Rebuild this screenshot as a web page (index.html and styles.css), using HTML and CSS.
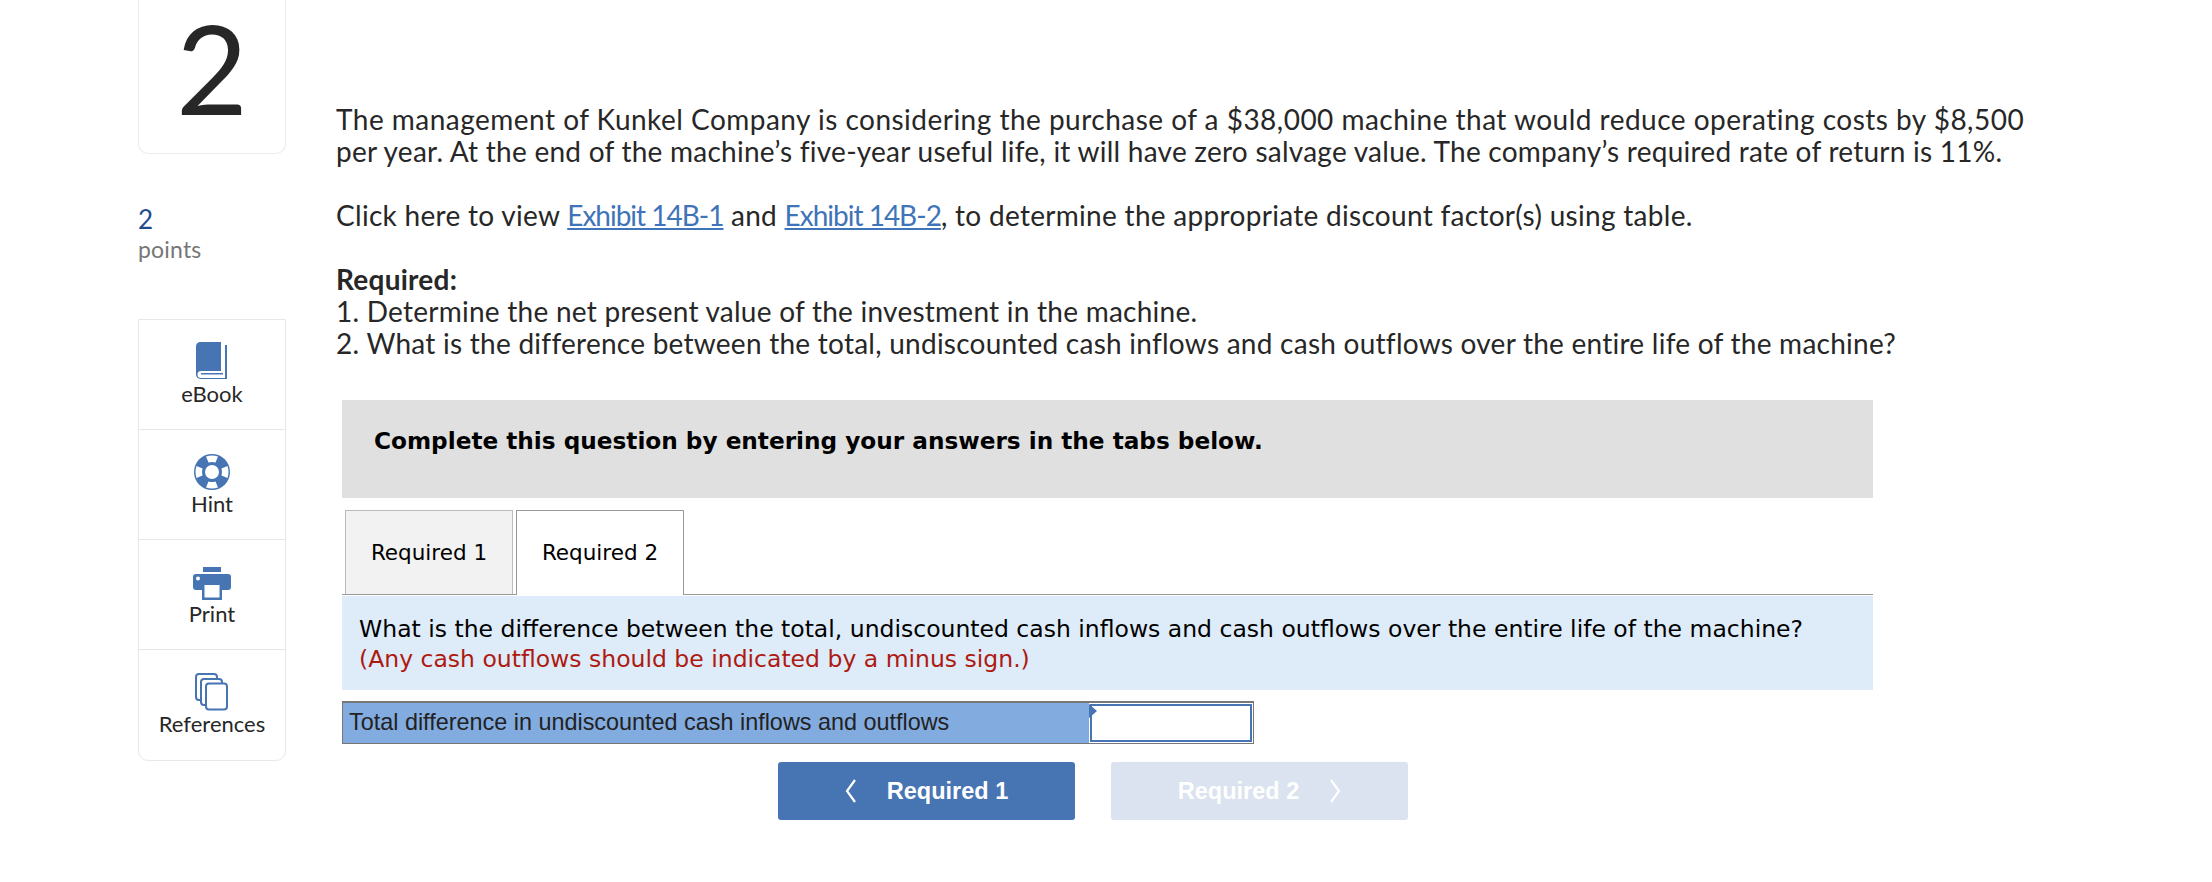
FILE: index.html
```html
<!DOCTYPE html>
<html lang="en">
<head>
    <meta charset="UTF-8">
    <title>Question 2</title>
    <link rel="stylesheet" href="styles.css">
</head>
<body>
<div class="page">
    <div class="side">
        <div class="number-card">2</div>
        <div class="points">
            <div class="points-value">2</div>
            <div class="points-label">points</div>
        </div>
        <div class="tools">
            <div class="tool">
                <svg width="36" height="40" viewBox="0 0 36 40">
                    <path fill="#4775b3" d="M6 1H27V30H7a3.500 3.500 0 0 0 0 7H31V4H33V38H7C3 38 2 35 2 33V5C2 3 4 1 6 1Z"/>
                    <path fill="#4775b3" d="M7 32H29V33.500H7Z"/>
                </svg>
                <span>eBook</span>
            </div>
            <div class="tool">
                <svg width="38" height="40" viewBox="0 -2 38 40">
                    <circle cx="19" cy="19" r="18" fill="#4775b3"/>
                    <circle cx="19" cy="19" r="7" fill="#fff"/>
                    <path fill="#fff" d="M13 3.500Q19 1.500 25 3.500L22.500 9.500Q19 8.500 15.500 9.500ZM13 34.500Q19 36.500 25 34.500L22.500 28.500Q19 29.500 15.500 28.500ZM3.500 13Q1.500 19 3.500 25L9.500 22.500Q8.500 19 9.500 15.500ZM34.500 13Q36.500 19 34.500 25L28.500 22.500Q29.500 19 28.500 15.500Z"/>
                </svg>
                <span>Hint</span>
            </div>
            <div class="tool">
                <svg width="38" height="40" viewBox="0 -6 38 40">
                    <path fill="#4775b3" d="M10 0H28V5H10ZM3 7H35a3 3 0 0 1 3 3V20a3 3 0 0 1-3 3H29V33H9V23H3a3 3 0 0 1-3-3V10a3 3 0 0 1 3-3Z"/>
                    <circle cx="5" cy="11.500" r="2" fill="#fff"/>
                    <rect x="11.500" y="18" width="15" height="12.500" fill="#fff"/>
                </svg>
                <span>Print</span>
            </div>
            <div class="tool">
                <svg width="34" height="40" viewBox="0 -2 34 40">
                    <rect x="1" y="1" width="21" height="26" rx="3" fill="#fff" stroke="#4775b3" stroke-width="2"/>
                    <rect x="6" y="6" width="21" height="26" rx="3" fill="#fff" stroke="#4775b3" stroke-width="2"/>
                    <rect x="11" y="10.500" width="21" height="26" rx="3" fill="#fff" stroke="#4775b3" stroke-width="2"/>
                </svg>
                <span>References</span>
            </div>
        </div>
    </div>

    <div class="question">
        <p><span class="wide">The management of Kunkel Company is considering the purchase of a $38,000 machine that would reduce operating costs by $8,500</span><br>per year. At the end of the machine’s five-year useful life, it will have zero salvage value. The company’s required rate of return is 11%.</p>
        <p class="tight">Click here to view <a href="#">Exhibit 14B-1</a> and <a href="#">Exhibit 14B-2</a>, to determine the appropriate discount factor(s) using table.</p>
        <p><strong>Required:</strong><br>1. Determine the net present value of the investment in the machine.<br>2. What is the difference between the total, undiscounted cash inflows and cash outflows over the entire life of the machine?</p>

        <div class="worksheet">
            <div class="banner">Complete this question by entering your answers in the tabs below.</div>
            <div class="tabs">
                <div class="tab">Required 1</div>
                <div class="tab active">Required 2</div>
            </div>
            <div class="prompt">
                What is the difference between the total, undiscounted cash inflows and cash outflows over the entire life of the machine?<br>
                <span class="prompt-note">(Any cash outflows should be indicated by a minus sign.)</span>
            </div>
            <div class="answer-row">
                <div class="answer-label">Total difference in undiscounted cash inflows and outflows</div>
                <div class="answer-cell"><div class="answer-input"></div><span class="answer-flag"></span></div>
            </div>
            <div class="nav">
                <button class="nav-btn" type="button">
                    <svg width="12" height="24" viewBox="0 0 12 24"><path d="M10 1L2 12L10 23" fill="none" stroke="#fff" stroke-width="2.200"/></svg>
                    Required 1
                </button>
                <button class="nav-btn disabled" type="button">
                    Required 2
                    <svg width="12" height="24" viewBox="0 0 12 24"><path d="M2 1L10 12L2 23" fill="none" stroke="#fff" stroke-width="2.200"/></svg>
                </button>
            </div>
        </div>
    </div>
</div>
</body>
</html>
```

FILE: styles.css
```css
html, body {
    margin: 0;
    padding: 0;
    background-color: #fff;
}
body {
    font-family: Lato, "Open Sans", sans-serif;
    color: #272727;
}
.page {
    display: flex;
    width: 2212px;
    height: 882px;
    overflow: hidden;
}
.side {
    width: 148px;
    margin-left: 138px;
}
.number-card {
    height: 154px;
    box-sizing: border-box;
    border: 1px solid #ebebeb;
    border-top: none;
    border-radius: 0 0 10px 10px;
    font-size: 124px;
    line-height: 134px;
    text-align: center;
}
.points {
    margin-top: 49px;
}
.points-value {
    font-size: 26px;
    line-height: 32px;
    color: #1f4b8e;
}
.points-label {
    font-size: 23px;
    letter-spacing: 0.2px;
    line-height: 28px;
    color: #767676;
}
.tools {
    margin-top: 56px;
    border: 1px solid #e8e8e8;
    border-radius: 0 0 10px 10px;
}
.tool {
    height: 110px;
    box-sizing: border-box;
    border-bottom: 1px solid #e8e8e8;
    padding-top: 21px;
    display: flex;
    flex-direction: column;
    align-items: center;
    font-size: 22px;
    line-height: 24px;
}
.tool:last-child {
    border-bottom: none;
}
.tool span {
    margin-top: 1px;
}
.question {
    margin-left: 50px;
    padding-top: 103px;
    font-size: 28px;
    letter-spacing: 0.25px;
    line-height: 32px;
}
.question p {
    margin: 0 0 32px;
    white-space: nowrap;
}
.question .wide {
    letter-spacing: 0.48px;
}
.question .tight {
    letter-spacing: 0.3px;
}
.question a {
    color: #3f74b8;
    letter-spacing: -1px;
}
.worksheet {
    width: 1531px;
    margin-left: 6px;
    margin-top: 41px;
    font-family: "DejaVu Sans", Verdana, sans-serif;
    letter-spacing: 0;
    color: #000;
}
.banner {
    height: 98px;
    box-sizing: border-box;
    background-color: #e0e0e0;
    padding: 25px 32px;
    font-size: 23.200px;
    line-height: 32px;
    font-weight: bold;
}
.tabs {
    display: flex;
    gap: 3px;
    height: 85px;
    box-sizing: border-box;
    margin-top: 12px;
    padding-left: 3px;
    border-bottom: 1px solid #999;
}
.tab {
    width: 168px;
    height: 84px;
    box-sizing: border-box;
    border: 1px solid #bbb;
    border-bottom: none;
    background-color: #f2f2f2;
    font-size: 21.500px;
    line-height: 84px;
    text-align: center;
}
.tab.active {
    height: 85px;
    border-color: #999;
    background-color: #fff;
}
.prompt {
    height: 94px;
    box-sizing: border-box;
    margin-top: 1px;
    background-color: #deebf8;
    padding: 18px 17px;
    font-size: 23.500px;
    line-height: 30px;
}
.prompt-note {
    color: #ad1a12;
}
.answer-row {
    display: flex;
    width: 912px;
    height: 43px;
    box-sizing: border-box;
    margin-top: 11px;
    border: 1px solid #777;
    border-top-width: 2px;
    font-family: "Liberation Sans", Arial, sans-serif;
    font-size: 23.400px;
    color: #222;
}
.answer-label {
    width: 746px;
    box-sizing: border-box;
    padding-left: 6px;
    background-color: #82abe0;
    line-height: 38px;
}
.answer-cell {
    position: relative;
    flex: 1;
    padding: 1px;
}
.answer-input {
    height: 34px;
    border: 2px solid #4775b3;
    background-color: #fff;
}
.answer-flag {
    position: absolute;
    top: 1px;
    left: 0;
    border-left: 8px solid #4775b3;
    border-top: 7px solid transparent;
    border-bottom: 7px solid transparent;
}
.nav {
    display: flex;
    gap: 36px;
    margin-top: 18px;
    margin-left: 436px;
}
.nav-btn {
    display: flex;
    align-items: center;
    justify-content: center;
    gap: 30px;
    width: 297px;
    height: 58px;
    border: none;
    border-radius: 3px;
    background-color: #4775b3;
    color: #fff;
    font-family: "Liberation Sans", Arial, sans-serif;
    font-size: 23.500px;
    font-weight: bold;
}
.nav-btn.disabled {
    background-color: #dae3ef;
}
```
